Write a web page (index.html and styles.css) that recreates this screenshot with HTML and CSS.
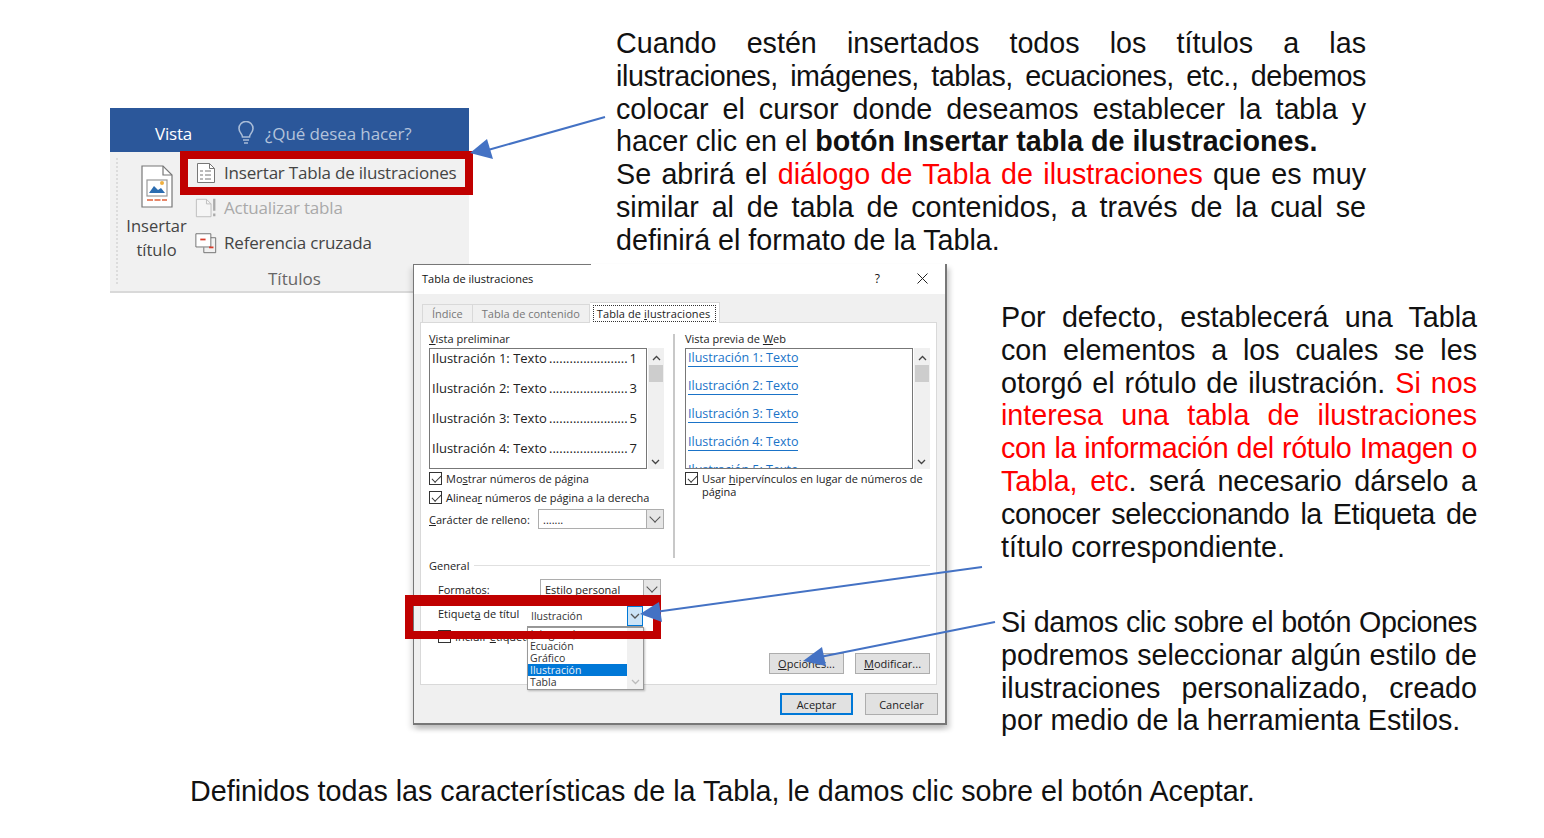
FILE: index.html
```html
<!DOCTYPE html>
<html lang="es">
<head>
    <meta charset="UTF-8" />
    <title>Tabla de ilustraciones</title>
    <link rel="stylesheet" href="styles.css">
</head>
<body>
<div class="slide">

    <div class="ribbon">
        <div class="ribbon-top">
            <span class="tab-vista">Vista</span>
            <svg class="bulb" width="18" height="24" viewBox="0 0 18 24" fill="none" stroke="#a9bcd8" stroke-width="1.6">
                <path d="M5.5 16c0-3-3.5-4.500-3.500-8.500a7 7 0 0 1 14 0c0 4-3.500 5.500-3.500 8.500z"/>
                <path d="M6 19h6M7 22h4"/>
            </svg>
            <span class="tell-me">¿Qué desea hacer?</span>
        </div>
        <div class="ribbon-body">
            <div class="big-btn">
                <svg width="32" height="43" viewBox="0 0 32 43" fill="#fff" stroke="#777" stroke-width="1.200">
                    <path d="M1 1h21l9 9v32H1z"/>
                    <path d="M22 1v9h9" fill="none"/>
                    <rect x="6" y="15" width="20" height="16" fill="#fff" stroke="#999"/>
                    <path d="M8 28l5-7 4 4 3-2 4 5z" fill="#2b6cb0" stroke="none"/>
                    <circle cx="21" cy="18" r="2" fill="#f0b040" stroke="none"/>
                    <path d="M6 35h20" stroke="#e0603a" stroke-width="1.600" stroke-dasharray="6 1.500"/>
                </svg>
                <span>Insertar<br>título</span>
            </div>
            <div class="small-btns">
                <div class="small-btn">
                    <svg width="20" height="22" viewBox="0 0 20 22" fill="#fff" stroke="#777">
                        <path d="M1.500 1.500h12l5 5v14h-17z"/>
                        <path d="M13.500 1.500v5h5M4 9h3M9 9h6M4 13h3M9 13h6M4 17h3M9 17h6" fill="none"/>
                    </svg>
                    <span>Insertar Tabla de ilustraciones</span>
                </div>
                <div class="small-btn off">
                    <svg width="24" height="22" viewBox="0 0 24 22" fill="#f5f5f5" stroke="#bbb">
                        <path d="M1.500 1.500h11l5 5v14h-16z"/>
                        <path d="M12.500 1.500v5h5" fill="none"/>
                        <path d="M21 1v13M21 17v3" stroke="#aaa" stroke-width="2.500"/>
                    </svg>
                    <span>Actualizar tabla</span>
                </div>
                <div class="small-btn">
                    <svg width="25" height="24" viewBox="0 0 25 24" fill="none" stroke="#666">
                        <path d="M1 1.500h17v15H1z" fill="#fff"/>
                        <path d="M6 8h6" stroke="#d83b2a" stroke-width="2"/>
                        <path d="M18 6h5.500v17H10v-6" />
                        <path d="M16 17h5" stroke="#d83b2a" stroke-width="2"/>
                    </svg>
                    <span>Referencia cruzada</span>
                </div>
            </div>
        </div>
        <div class="group-name">Títulos</div>
    </div>

    <div class="text-box box-a">
        <span class="ln">Cuando estén insertados todos los títulos a las</span>
        <span class="ln tight">ilustraciones, imágenes, tablas, ecuaciones, etc., debemos</span>
        <span class="ln">colocar el cursor donde deseamos establecer la tabla y</span>
        <span class="end">hacer clic en el <b>botón Insertar tabla de ilustraciones.</b></span>
        <span class="ln">Se abrirá el <span class="red">diálogo de Tabla de ilustraciones</span> que es muy</span>
        <span class="ln">similar al de tabla de contenidos, a través de la cual se</span>
        <span class="end">definirá el formato de la Tabla.</span>
    </div>

    <div class="text-box box-b">
        <span class="ln">Por defecto, establecerá una Tabla</span>
        <span class="ln">con elementos a los cuales se les</span>
        <span class="ln">otorgó el rótulo de ilustración. <span class="red">Si nos</span></span>
        <span class="ln red">interesa una tabla de ilustraciones</span>
        <span class="ln red tight">con la información del rótulo Imagen o</span>
        <span class="ln"><span class="red">Tabla, etc</span>. será necesario dárselo a</span>
        <span class="ln tight">conocer seleccionando la Etiqueta de</span>
        <span class="end">título correspondiente.</span>
    </div>

    <div class="text-box box-c">
        <span class="ln tight">Si damos clic sobre el botón Opciones</span>
        <span class="ln">podremos seleccionar algún estilo de</span>
        <span class="ln">ilustraciones personalizado, creado</span>
        <span class="end">por medio de la herramienta Estilos.</span>
    </div>

    <div class="text-box box-d">Definidos todas las características de la Tabla, le damos clic sobre el botón Aceptar.</div>

    <div class="dialog">
        <div class="dlg-title">
            <span>Tabla de ilustraciones</span>
            <span class="dlg-help">?</span>
            <svg width="11" height="11" viewBox="0 0 11 11" stroke="#222" stroke-width="1"><path d="M.5.500l10 10M10.500.500l-10 10"/></svg>
        </div>
        <div class="dlg-body">
            <div class="tabs">
                <span class="tab">Índice</span>
                <span class="tab">Tabla de contenido</span>
                <span class="tab active"><span class="focus">Tabla de <u>i</u>lustraciones</span></span>
            </div>
            <div class="panel">
                <div class="columns">
                    <div class="col-left">
                        <div class="lbl"><u>V</u>ista preliminar</div>
                        <div class="list-wrap">
                            <div class="list print-list">
                                <div class="entry"><span>Ilustración 1: Texto </span><span class="dots">.......................</span><span>1</span></div>
                                <div class="entry"><span>Ilustración 2: Texto </span><span class="dots">.......................</span><span>3</span></div>
                                <div class="entry"><span>Ilustración 3: Texto </span><span class="dots">.......................</span><span>5</span></div>
                                <div class="entry"><span>Ilustración 4: Texto </span><span class="dots">.......................</span><span>7</span></div>
                            </div>
                            <div class="scrollbar">
                                <svg width="9" height="6" viewBox="0 0 9 6" fill="none" stroke="#444" stroke-width="1.300"><path d="M1 5l3.500-3.500L8 5"/></svg>
                                <i></i>
                                <svg class="down" width="9" height="6" viewBox="0 0 9 6" fill="none" stroke="#444" stroke-width="1.300"><path d="M1 1l3.500 3.500L8 1"/></svg>
                            </div>
                        </div>
                        <label class="check"><span class="box"></span><span>Mo<u>s</u>trar números de página</span></label>
                        <label class="check"><span class="box"></span><span>Alinea<u>r</u> números de página a la derecha</span></label>
                        <div class="fill-row">
                            <span><u>C</u>arácter de relleno:</span>
                            <div class="combo fill-combo"><span class="combo-text">.......</span><span class="combo-btn"></span></div>
                        </div>
                    </div>
                    <div class="col-right">
                        <div class="lbl">Vista previa de <u>W</u>eb</div>
                        <div class="list-wrap">
                            <div class="list web-list">
                                <a>Ilustración 1: Texto</a>
                                <a>Ilustración 2: Texto</a>
                                <a>Ilustración 3: Texto</a>
                                <a>Ilustración 4: Texto</a>
                                <a>Ilustración 5: Texto</a>
                            </div>
                            <div class="scrollbar">
                                <svg width="9" height="6" viewBox="0 0 9 6" fill="none" stroke="#444" stroke-width="1.300"><path d="M1 5l3.500-3.500L8 5"/></svg>
                                <i></i>
                                <svg class="down" width="9" height="6" viewBox="0 0 9 6" fill="none" stroke="#444" stroke-width="1.300"><path d="M1 1l3.500 3.500L8 1"/></svg>
                            </div>
                        </div>
                        <label class="check wide"><span class="box"></span><span>Usar <u>h</u>ipervínculos en lugar de números de página</span></label>
                    </div>
                </div>
                <div class="general">
                    <div class="general-head"><span>General</span><hr></div>
                    <div class="gen-row">
                        <span class="gen-lbl">Formatos:</span>
                        <div class="combo fmt-combo"><span class="combo-text">Estilo personal</span><span class="combo-btn"></span></div>
                    </div>
                    <div class="gen-row">
                        <span class="gen-lbl">Etiquet<u>a</u> de títul</span>
                    </div>
                    <label class="check incl"><span class="box empty"></span><span>Incluir <u>e</u>tiqueta y número</span></label>
                </div>
                <div class="panel-btns">
                    <span class="btn"><span><u>O</u>pciones...</span></span>
                    <span class="btn"><span><u>M</u>odificar...</span></span>
                </div>
            </div>
            <div class="dlg-foot">
                <span class="btn primary">Aceptar</span>
                <span class="btn">Cancelar</span>
            </div>
        </div>
    </div>

    <div class="dropdown">
        <div class="dd-head"><span>Ilustración</span><span class="dd-btn"><svg width="10" height="6" viewBox="0 0 10 6" fill="none" stroke="#555" stroke-width="1.300"><path d="M1 1l4 4 4-4"/></svg></span></div>
        <div class="dd-list">
            <div class="dd-items">
                <div>(ninguna)</div>
                <div>Ecuación</div>
                <div>Gráfico</div>
                <div class="sel">Ilustración</div>
                <div>Tabla</div>
            </div>
            <div class="dd-scroll"><svg width="9" height="6" viewBox="0 0 9 6" fill="none" stroke="#bbb" stroke-width="1.300"><path d="M1 1l3.500 3.500L8 1"/></svg></div>
        </div>
    </div>

    <div class="redbox red-a"></div>
    <div class="redbox red-b"></div>

    <svg class="arrows" width="1544" height="838" viewBox="0 0 1544 838">
        <g stroke="#4472c4" stroke-width="2" fill="#4472c4">
            <path d="M605 117L488 150"/>
            <path d="M982 567L655 612"/>
            <path d="M995 622L820 657"/>
        </g>
        <g fill="#4472c4">
            <path d="M470 153L487 139L493 159z"/>
            <path d="M640 614L659 602L662 622z"/>
            <path d="M803 661L822 647L826 666z"/>
        </g>
    </svg>
</div>
</body>
</html>
```

FILE: styles.css
```css
* {
    box-sizing: border-box;
}
body {
    margin: 0;
    background: #fff;
    font-family: "Liberation Sans", Arial, sans-serif;
}
.slide {
    position: relative;
    width: 1544px;
    height: 838px;
    overflow: hidden;
}
.red {
    color: #ff0000;
}

/* text boxes of the slide */
.text-box {
    position: absolute;
    font-size: 28.700px;
    line-height: 32.800px;
    color: #111;
}
.ln {
    display: block;
    text-align: justify;
    text-align-last: justify;
}
.end {
    display: block;
}
.tight {
    letter-spacing: -.4px;
}
.box-a {
    left: 616px;
    top: 27px;
    width: 750px;
}
.box-b {
    left: 1001px;
    top: 301px;
    width: 476px;
}
.box-c {
    left: 1001px;
    top: 606px;
    width: 476px;
}
.box-d {
    left: 190px;
    top: 775px;
    white-space: nowrap;
}

/* ribbon capture */
.ribbon {
    position: absolute;
    left: 110px;
    top: 108px;
    width: 359px;
    height: 185px;
    background: #f1f1f1;
    border-bottom: 2px solid #d9d9d9;
    font-family: "Open Sans", sans-serif;
    color: #444;
}
.ribbon::before {
    content: "";
    position: absolute;
    left: 6px;
    top: 50px;
    height: 126px;
    border-left: 2px dotted #dcdcdc;
}
.ribbon-top {
    display: flex;
    align-items: center;
    height: 44px;
    padding: 6px 0 0 45px;
    background: #2b579a;
}
.tab-vista {
    color: #fff;
    font-size: 17px;
    letter-spacing: -.2px;
}
.bulb {
    margin-left: 45px;
}
.tell-me {
    margin-left: 10px;
    color: #b4c3da;
    font-size: 17px;
    letter-spacing: -.1px;
}
.ribbon-body {
    display: flex;
    padding: 13px 0 0 6px;
}
.big-btn {
    display: flex;
    flex-direction: column;
    align-items: center;
    width: 70px;
    padding-left: 11px;
    font-size: 16.500px;
    line-height: 24px;
    text-align: center;
}
.big-btn span {
    margin-top: 6px;
}
.small-btns {
    display: flex;
    flex-direction: column;
    margin-left: 9px;
    margin-top: -10px;
}
.small-btn {
    display: flex;
    align-items: center;
    gap: 7px;
    height: 35px;
    font-size: 17px;
    letter-spacing: -.2px;
    white-space: nowrap;
}
.small-btn svg {
    width: 22px;
    flex: none;
}
.small-btn.off {
    color: #a9a9a9;
}
.group-name {
    position: absolute;
    left: 158px;
    top: 159px;
    font-size: 17px;
    color: #666;
}

/* dialog capture */
.dialog {
    position: absolute;
    left: 413px;
    top: 264px;
    width: 534px;
    height: 461px;
    display: flex;
    flex-direction: column;
    background: #fff;
    border-left: 1px solid #777;
    border-right: 2px solid #777;
    border-bottom: 2px solid #777;
    box-shadow: 3px 4px 5px rgba(0, 0, 0, .18), -3px 4px 5px rgba(0, 0, 0, .1);
    font-family: "Open Sans", sans-serif;
    font-size: 11px;
    color: #222;
}
.dialog::before {
    content: "";
    position: absolute;
    left: -1px;
    top: 0;
    width: 178px;
    border-top: 1px solid #777;
}
.dlg-title {
    display: flex;
    align-items: center;
    height: 30px;
    flex: none;
    padding: 0 17px 2px 8px;
    color: #111;
}
.dlg-help {
    margin-left: auto;
    margin-right: 37px;
    font-size: 12px;
}
.dlg-body {
    flex: 1;
    display: flex;
    flex-direction: column;
    padding: 8px 8px 0 6px;
    background: #f0f0f0;
}
.tabs {
    display: flex;
    height: 20px;
    flex: none;
    align-items: flex-end;
    padding-left: 2px;
}
.tab {
    display: flex;
    align-items: center;
    height: 18px;
    padding: 0 9px;
    color: #777;
    border: 1px solid #d9d9d9;
    border-bottom: 0;
    border-left-width: 0;
}
.tab:first-child {
    border-left-width: 1px;
}
.tab.active {
    height: 21px;
    padding: 0 3px;
    background: #fff;
    color: #222;
    margin-bottom: -1px;
    position: relative;
    z-index: 1;
    letter-spacing: .1px;
}
.focus {
    padding: 0 5px 0 3px;
    border: 1px dotted #333;
}
.panel {
    display: flex;
    flex-direction: column;
    height: 363px;
    flex: none;
    padding: 9px 6px 10px 8px;
    background: #fff;
    border: 1px solid #d9d9d9;
}
.columns {
    display: flex;
    height: 226px;
    flex: none;
}
.col-left {
    position: relative;
    flex: none;
    width: 245px;
    padding-right: 10px;
}
.col-left::after {
    content: "";
    position: absolute;
    right: -1px;
    top: 2px;
    bottom: 0;
    width: 2px;
    background: #c8c8c8;
}
.col-right {
    flex: none;
    width: 256px;
    padding-left: 11px;
}
.lbl {
    height: 16px;
    line-height: 13px;
}
.list-wrap {
    display: flex;
    height: 121px;
}
.list {
    flex: 1;
    overflow: hidden;
    background: #fff;
    border: 1px solid #777;
}
.print-list {
    padding: 0 9px 0 2px;
    font-size: 13px;
}
.entry {
    display: flex;
    height: 30px;
    line-height: 18px;
    white-space: nowrap;
}
.dots {
    flex: 1;
    overflow: hidden;
    text-align: right;
    padding-right: 2px;
}
.web-list {
    padding: 0 2px;
    font-size: 12.500px;
}
.web-list a {
    display: block;
    width: max-content;
    height: 28px;
    color: #1a73c8;
    line-height: 17px;
}
.web-list a:not(:last-child) {
    height: 18px;
    margin-bottom: 10px;
    border-bottom: 1px solid #1a73c8;
}
.scrollbar {
    position: relative;
    flex: none;
    width: 16px;
    margin-left: 1px;
    background: #f0f0f0;
    text-align: center;
}
.scrollbar svg {
    display: block;
    margin: 7px auto 0;
}
.scrollbar i {
    display: block;
    height: 17px;
    margin: 4px 1px 0;
    background: #cdcdcd;
}
.scrollbar .down {
    position: absolute;
    left: 3px;
    bottom: 4px;
}
.check {
    display: flex;
    align-items: center;
    gap: 4px;
    height: 19px;
    white-space: nowrap;
}
.box {
    position: relative;
    flex: none;
    width: 13px;
    height: 13px;
    background: #fff;
    border: 1px solid #333;
}
.box::after {
    content: "";
    position: absolute;
    left: 2px;
    top: 1px;
    width: 8px;
    height: 4px;
    border-left: 1px solid #333;
    border-bottom: 1px solid #333;
    transform: rotate(-45deg) translate(-1px, 1px);
}
.box.empty::after {
    display: none;
}
.check.wide {
    align-items: flex-start;
    white-space: normal;
    line-height: 13px;
    padding-top: 3px;
    height: auto;
}
.fill-row {
    display: flex;
    align-items: center;
    justify-content: space-between;
    height: 24px;
}
.combo {
    display: flex;
    height: 20px;
    background: #fff;
    border: 1px solid #adadad;
}
.fill-combo {
    width: 126px;
}
.combo-text {
    flex: 1;
    padding-left: 4px;
    line-height: 19px;
}
.combo-btn {
    position: relative;
    flex: none;
    width: 17px;
    background: #e6e6e6;
    border-left: 1px solid #adadad;
}
.combo-btn::after {
    content: "";
    position: absolute;
    left: 4px;
    top: 3px;
    width: 7px;
    height: 7px;
    border-right: 1px solid #555;
    border-bottom: 1px solid #555;
    transform: rotate(45deg);
}
.general {
    flex: none;
}
.general-head {
    display: flex;
    align-items: center;
    gap: 5px;
    height: 14px;
}
.general-head hr {
    flex: 1;
    margin: 0;
    border: 0;
    border-top: 1px solid #e0e0e0;
}
.gen-row {
    display: flex;
    align-items: center;
    height: 24px;
    padding-left: 9px;
}
.gen-row:nth-child(2) {
    margin-top: 5px;
}
.gen-lbl {
    width: 102px;
    flex: none;
}
.fmt-combo {
    width: 121px;
}
.incl {
    padding-left: 9px;
    margin-top: 2px;
}
.panel-btns {
    display: flex;
    justify-content: flex-end;
    gap: 11px;
    margin-top: auto;
}
.btn {
    display: flex;
    align-items: center;
    justify-content: center;
    width: 75px;
    height: 21px;
    background: #e1e1e1;
    border: 1px solid #adadad;
    color: #222;
}
.dlg-foot {
    display: flex;
    justify-content: flex-end;
    gap: 12px;
    padding-top: 8px;
    margin-right: -1px;
}
.dlg-foot .btn {
    width: 73px;
    height: 22px;
}
.dlg-foot .primary {
    border: 2px solid #0078d7;
}

/* open combo over the dialog */
.dropdown {
    position: absolute;
    left: 527px;
    top: 606px;
    width: 117px;
    font-family: "Open Sans", sans-serif;
    font-size: 10.500px;
    color: #333;
}
.dd-head {
    display: flex;
    width: 116px;
    height: 21px;
    background: #fff;
    border-bottom: 1px solid #999;
    line-height: 20px;
    padding-left: 4px;
    justify-content: space-between;
}
.dd-btn {
    display: flex;
    align-items: center;
    justify-content: center;
    width: 16px;
    background: #cce4f7;
    border: 1px solid #0078d7;
}
.dd-list {
    display: flex;
    height: 63px;
    background: #fff;
    border: 1px solid #999;
    box-shadow: 1px 1px 2px rgba(0, 0, 0, .25);
}
.dd-items {
    flex: 1;
    line-height: 12px;
    overflow: hidden;
}
.dd-items div {
    padding-left: 2px;
    height: 12px;
}
.dd-items .sel {
    background: #0078d7;
    color: #e8f0f8;
}
.dd-scroll {
    display: flex;
    align-items: flex-end;
    justify-content: center;
    flex: none;
    width: 16px;
    padding-bottom: 4px;
    background: #f0f0f0;
}

/* annotations over the captures */
.redbox {
    position: absolute;
    border: 8px solid #c00000;
}
.red-a {
    left: 180px;
    top: 151px;
    width: 293px;
    height: 44px;
}
.red-b {
    left: 405px;
    top: 595px;
    width: 256px;
    height: 44px;
    border-top-width: 11px;
}
.arrows {
    position: absolute;
    left: 0;
    top: 0;
}
```
